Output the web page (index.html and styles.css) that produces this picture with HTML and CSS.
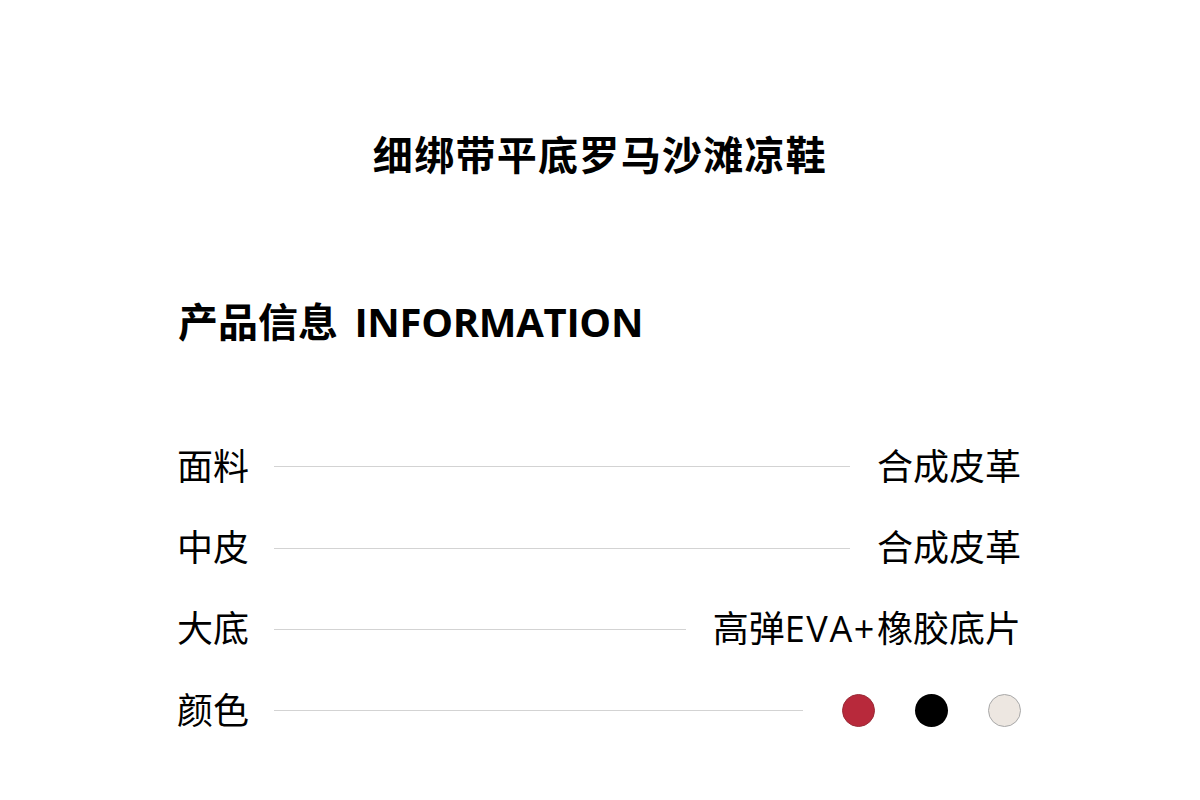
FILE: index.html
```html
<!DOCTYPE html>
<html lang="zh-CN">
<head>
<meta charset="utf-8">
<title>细绑带平底罗马沙滩凉鞋</title>
<link rel="stylesheet" href="styles.css">
</head>
<body>
<div class="page">
  <h1 class="title">细绑带平底罗马沙滩凉鞋</h1>
  <h2 class="heading">产品信息 <span class="latin">INFORMATION</span></h2>
  <div class="rows">
    <div class="row">
      <span class="label">面料</span>
      <span class="line"></span>
      <span class="value">合成皮革</span>
    </div>
    <div class="row">
      <span class="label">中皮</span>
      <span class="line"></span>
      <span class="value">合成皮革</span>
    </div>
    <div class="row">
      <span class="label">大底</span>
      <span class="line"></span>
      <span class="value">高弹<span class="latin-wide">EVA+</span>橡胶底片</span>
    </div>
    <div class="row">
      <span class="label">颜色</span>
      <span class="line"></span>
      <span class="swatches">
        <span class="swatch swatch-red"></span>
        <span class="swatch swatch-black"></span>
        <span class="swatch swatch-cream"></span>
      </span>
    </div>
  </div>
</div>
</body>
</html>
```

FILE: styles.css
```css
html, body {
  margin: 0;
  padding: 0;
  background: #ffffff;
}

body {
  font-family: "Open Sans", "Noto Sans CJK SC", sans-serif;
  color: #000000;
}

.page {
  width: 842px;
  margin: 0 auto;
  padding-top: 131px;
}

.title {
  margin: 0;
  font-size: 40px;
  line-height: 48px;
  font-weight: 700;
  text-align: center;
  letter-spacing: 1.3px;
}

.heading {
  margin: 119px 0 0 -1px;
  font-size: 40px;
  line-height: 48px;
  font-weight: 700;
}

.heading .latin {
  margin-left: 6px;
  letter-spacing: -0.3px;
}

.rows {
  margin-top: 80px;
}

.row {
  display: flex;
  align-items: center;
  height: 81.4px;
  font-size: 36px;
  margin-left: -2px;
}

.label,
.value {
  line-height: 1;
  white-space: nowrap;
}

.latin-wide {
  letter-spacing: 1.6px;
  margin-right: 1px;
}

.line {
  flex: 1;
  height: 1px;
  background: #d3d3d3;
  margin: 0 27px 0 25px;
}

.swatches {
  display: flex;
  gap: 40px;
  margin-left: 12px;
}

.swatch {
  width: 33px;
  height: 33px;
  border-radius: 50%;
  box-sizing: border-box;
}

.swatch-red {
  background: #b8293b;
  border: 1px solid #9a2a36;
}

.swatch-black {
  background: #000000;
}

.swatch-cream {
  background: #ede7e1;
  border: 1px solid #a8a8a8;
}
```
